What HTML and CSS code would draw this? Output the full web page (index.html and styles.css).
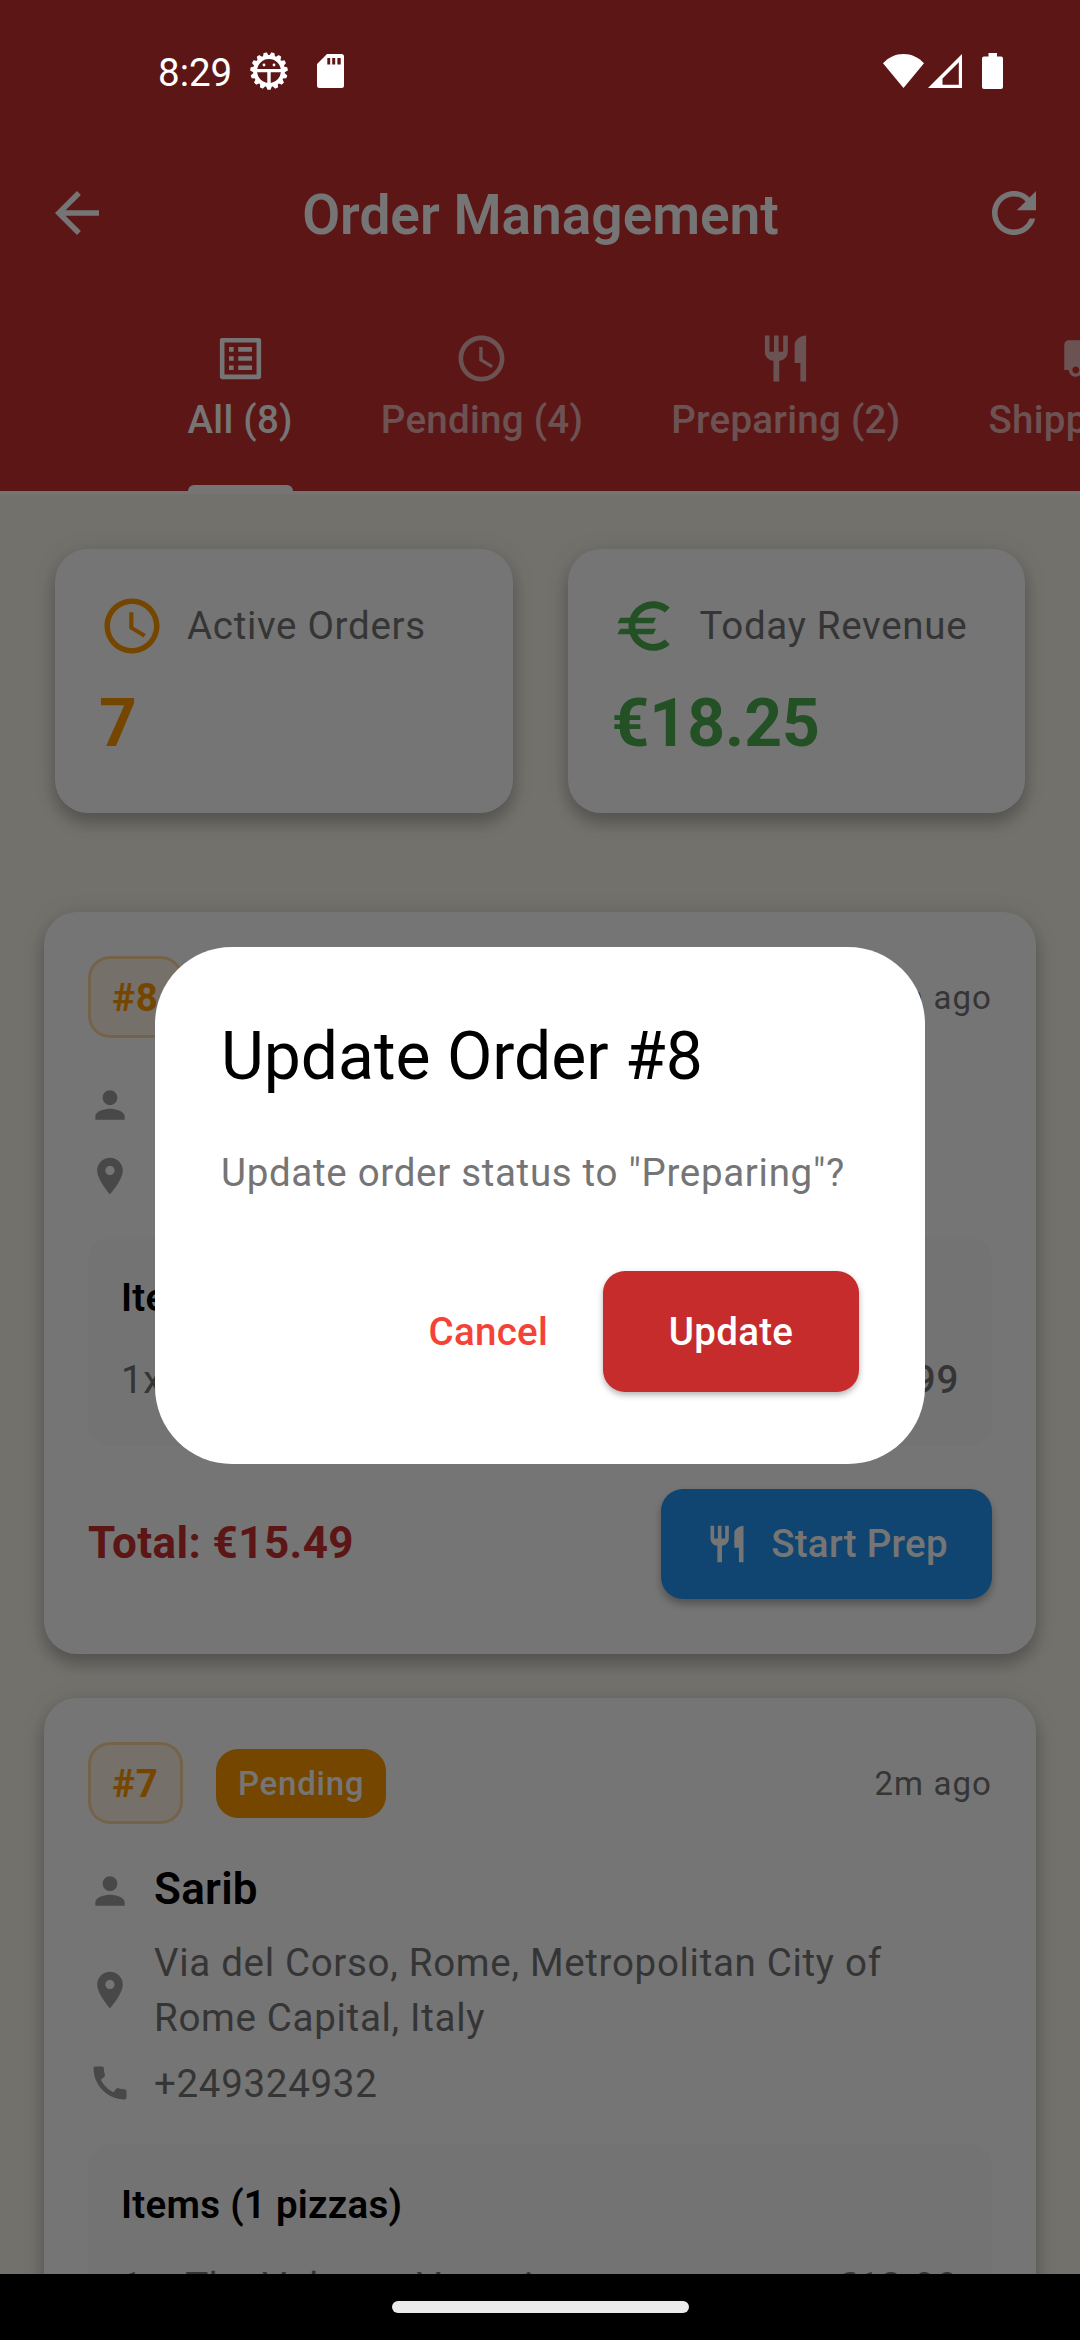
FILE: index.html
```html
<!DOCTYPE html>
<html lang="en">
<head>
<meta charset="utf-8">
<title>Order Management</title>
<link rel="stylesheet" href="styles.css">
</head>
<body>
<svg class="sprite" aria-hidden="true">
  <symbol id="clock" viewBox="0 0 24 24"><path d="M11.99 2C6.47 2 2 6.48 2 12s4.47 10 9.99 10C17.52 22 22 17.52 22 12S17.52 2 11.99 2zM12 20c-4.42 0-8-3.58-8-8s3.58-8 8-8 8 3.58 8 8-3.58 8-8 8zm.5-13H11v6l5.25 3.15.75-1.23-4.5-2.67z"/></symbol>
  <symbol id="restaurant" viewBox="0 0 24 24"><path d="M11 9H9V2H7v7H5V2H3v7c0 2.12 1.66 3.84 3.75 3.97V22h2.5v-9.03C11.34 12.84 13 11.12 13 9V2h-2v7zm5-3v8h2.5v8H21V2c-2.76 0-5 2.24-5 4z"/></symbol>
  <symbol id="person" viewBox="0 0 24 24"><path d="M12 12c2.21 0 4-1.79 4-4s-1.79-4-4-4-4 1.79-4 4 1.79 4 4 4zm0 2c-2.67 0-8 1.34-8 4v2h16v-2c0-2.66-5.33-4-8-4z"/></symbol>
  <symbol id="place" viewBox="0 0 24 24"><path d="M12 2C8.13 2 5 5.13 5 9c0 5.25 7 13 7 13s7-7.75 7-13c0-3.87-3.13-7-7-7zm0 9.500c-1.380 0-2.500-1.120-2.500-2.500s1.120-2.500 2.500-2.500 2.500 1.120 2.500 2.500-1.120 2.500-2.500 2.500z"/></symbol>
  <symbol id="phone" viewBox="0 0 24 24"><path d="M20.010 15.380c-1.230 0-2.420-.2-3.530-.56-.35-.12-.74-.03-1.010.24l-1.570 1.970c-2.830-1.350-5.480-3.900-6.890-6.830l1.950-1.660c.27-.28.35-.67.24-1.020-.37-1.110-.56-2.300-.56-3.530 0-.54-.45-.99-.99-.99H4.190C3.650 3 3 3.240 3 3.990 3 13.280 10.730 21 20.010 21c.71 0 .99-.63.99-1.180v-3.450c0-.54-.45-.99-.99-.99z"/></symbol>
  <symbol id="tooth" viewBox="0 0 38 38"><path d="M15.800 33.500h6.400l-1.700 4.300h-3z"/></symbol>
</svg>

<div class="screen">
  <header class="app-bar">
    <div class="toolbar">
      <svg class="icon-24" viewBox="0 0 24 24"><path d="M20 11H7.830l5.590-5.590L12 4l-8 8 8 8 1.410-1.410L7.830 13H20v-2z"/></svg>
      <h1 class="title">Order Management</h1>
      <svg class="icon-24" viewBox="0 0 24 24"><path d="M17.650 6.350C16.200 4.900 14.210 4 12 4c-4.420 0-7.990 3.580-7.990 8s3.570 8 7.990 8c3.730 0 6.840-2.550 7.730-6h-2.080c-.82 2.330-3.040 4-5.650 4-3.310 0-6-2.690-6-6s2.690-6 6-6c1.660 0 3.140.69 4.220 1.780L13 11h7V4l-2.350 2.350z"/></svg>
    </div>
    <nav class="tabs">
      <div class="tab active">
        <svg class="icon-20" viewBox="0 0 24 24"><path d="M11 7h6v2h-6zm0 4h6v2h-6zm0 4h6v2h-6zM7 7h2v2H7zm0 4h2v2H7zm0 4h2v2H7zM20.100 3H3.900c-.5 0-.9.4-.9.9v16.200c0 .4.4.9.9.9h16.200c.4 0 .9-.5.9-.9V3.900c0-.5-.5-.9-.9-.9zM19 19H5V5h14v14z"/></svg>
        <span>All (8)</span>
      </div>
      <div class="tab"><svg class="icon-20"><use href="#clock"/></svg><span>Pending (4)</span></div>
      <div class="tab"><svg class="icon-20"><use href="#restaurant"/></svg><span>Preparing (2)</span></div>
      <div class="tab">
        <svg class="icon-20" viewBox="0 0 24 24"><path d="M20 8h-3V4H3c-1.100 0-2 .9-2 2v11h2c0 1.660 1.340 3 3 3s3-1.340 3-3h6c0 1.660 1.340 3 3 3s3-1.340 3-3h2v-5l-3-4zM6 18.500c-.83 0-1.500-.67-1.500-1.500s.67-1.500 1.500-1.500 1.500.67 1.500 1.500-.67 1.500-1.500 1.500zm13.500-9l1.960 2.500H17V9.500h2.500zm-1.500 9c-.83 0-1.500-.67-1.500-1.500s.67-1.500 1.500-1.500 1.500.67 1.500 1.500-.67 1.500-1.500 1.500z"/></svg>
        <span>Shipped (1)</span>
      </div>
    </nav>
  </header>

  <main class="content">
    <section class="stats">
      <div class="stat orange">
        <div class="stat-head"><svg class="icon-24"><use href="#clock"/></svg><span>Active Orders</span></div>
        <div class="stat-value">7</div>
      </div>
      <div class="stat green">
        <div class="stat-head"><svg class="icon-24" viewBox="0 0 24 24"><path d="M15 18.500c-2.510 0-4.680-1.420-5.760-3.500H15l1-2H8.580c-.05-.33-.08-.66-.08-1s.03-.67.08-1H15l1-2H9.240C10.320 6.920 12.500 5.500 15 5.500c1.610 0 3.090.59 4.230 1.570L21 5.300C19.410 3.870 17.300 3 15 3c-3.920 0-7.240 2.510-8.480 6H3l-1 2h4.060c-.04.33-.06.66-.06 1s.02.67.06 1H3l-1 2h4.520c1.240 3.490 4.560 6 8.480 6 2.310 0 4.410-.87 6-2.300l-1.780-1.770c-1.130.98-2.600 1.570-4.220 1.570z"/></svg><span>Today Revenue</span></div>
        <div class="stat-value">€18.25</div>
      </div>
    </section>

    <section class="orders">
      <article class="order">
        <div class="order-head"><span class="number">#8</span><span class="status">Pending</span><span class="age">1m ago</span></div>
        <div class="details">
          <div class="detail name"><svg class="icon-16"><use href="#person"/></svg></div>
          <div class="detail"><svg class="icon-16"><use href="#place"/></svg></div>
        </div>
        <div class="items">
          <h2 class="items-title">Items (1 pizzas)</h2>
          <div class="item"><span>1x</span><span class="price">€12.99</span></div>
        </div>
        <div class="order-foot">
          <span class="total">Total: €15.49</span>
          <button class="prep"><svg class="icon-16"><use href="#restaurant"/></svg><span>Start Prep</span></button>
        </div>
      </article>

      <article class="order">
        <div class="order-head"><span class="number">#7</span><span class="status">Pending</span><span class="age">2m ago</span></div>
        <div class="details">
          <div class="detail name"><svg class="icon-16"><use href="#person"/></svg><span>Sarib</span></div>
          <div class="detail"><svg class="icon-16"><use href="#place"/></svg><span>Via del Corso, Rome, Metropolitan City of Rome Capital, Italy</span></div>
          <div class="detail"><svg class="icon-16"><use href="#phone"/></svg><span>+249324932</span></div>
        </div>
        <div class="items">
          <h2 class="items-title">Items (1 pizzas)</h2>
          <div class="item"><span>1x</span><span>The Volcano Vesuvio</span><span class="price">€12.99</span></div>
        </div>
      </article>
    </section>
  </main>

  <div class="scrim">
    <div class="dialog">
      <h2 class="dialog-title">Update Order #8</h2>
      <p class="dialog-text">Update order status to "Preparing"?</p>
      <div class="dialog-actions"><button class="cancel">Cancel</button><button class="confirm">Update</button></div>
    </div>
  </div>

  <div class="status-bar">
    <span class="time">8:29</span>
    <svg class="gear" viewBox="0 0 38 38">
      <circle cx="19" cy="19" r="13.900" fill="none" stroke="#fff" stroke-width="4"/>
      <path d="M6 17h26v3.200H20.700v12h-3.400v-12H6z"/>
      <circle cx="14" cy="13" r="1.400"/><circle cx="24" cy="13" r="1.400"/>
      <use href="#tooth"/>
      <use href="#tooth" transform="rotate(24 19 19)"/><use href="#tooth" transform="rotate(48 19 19)"/>
      <use href="#tooth" transform="rotate(72 19 19)"/><use href="#tooth" transform="rotate(96 19 19)"/>
      <use href="#tooth" transform="rotate(120 19 19)"/><use href="#tooth" transform="rotate(144 19 19)"/>
      <use href="#tooth" transform="rotate(168 19 19)"/><use href="#tooth" transform="rotate(192 19 19)"/>
      <use href="#tooth" transform="rotate(216 19 19)"/><use href="#tooth" transform="rotate(240 19 19)"/>
      <use href="#tooth" transform="rotate(264 19 19)"/><use href="#tooth" transform="rotate(288 19 19)"/>
      <use href="#tooth" transform="rotate(312 19 19)"/><use href="#tooth" transform="rotate(336 19 19)"/>
    </svg>
    <svg class="sd" viewBox="0 0 27 34"><path fill-rule="evenodd" d="M10 0h14.500a2.500 2.500 0 0 1 2.500 2.500v29a2.500 2.500 0 0 1-2.500 2.500h-22A2.500 2.500 0 0 1 0 31.500V10zm.3 4v6.500h2.900V4zm4.900 0v6.500h3V4zm5.200 0v6.500h3.300V4z"/></svg>
    <span class="spacer"></span>
    <svg class="wifi" viewBox="0 0 41 34"><path d="M0 9.300C5.500 3.300 12.600 0 20.500 0S35.500 3.300 41 9.300L20.500 34z"/></svg>
    <svg class="signal" viewBox="0 0 34 34"><path fill-rule="evenodd" d="M0 34L34 0v34zm14.500-3.300h16.300V8.300L14.500 24.500z"/></svg>
    <svg class="battery" viewBox="0 0 21 36"><path d="M6.500 0h8.500v3.500h4a2 2 0 0 1 2 2V34a2 2 0 0 1-2 2H2a2 2 0 0 1-2-2V5.500a2 2 0 0 1 2-2h4.500z"/></svg>
  </div>
  <div class="nav-bar"><span class="handle"></span></div>
</div>
</body>
</html>
```
FILE: styles.css
```css
* { box-sizing: border-box; margin: 0; padding: 0; }
body { font-family: Roboto, "Liberation Sans", sans-serif; font-size: 38.5px; line-height: 55px; letter-spacing: 0.69px; color: #757575; }
button { font: inherit; letter-spacing: 0.27px; border: 0; }
svg { display: block; flex: none; fill: currentColor; }
.sprite { position: absolute; width: 0; height: 0; }
.icon-24 { width: 66px; height: 66px; }
.icon-20 { width: 55px; height: 55px; }
.icon-16 { width: 44px; height: 44px; }

.screen { position: relative; width: 1080px; height: 2340px; overflow: hidden; background: #faf6ec; }

.app-bar { height: 494px; padding-top: 136px; background: #ca3030; border-bottom: 3px solid #fff; color: #fff; overflow: hidden; }
.toolbar { display: flex; align-items: center; justify-content: space-between; height: 154px; padding: 0 33px 0 44px; }
.title { margin-right: 10px; padding-top: 3px; font-size: 55px; line-height: 70px; font-weight: 600; letter-spacing: 0; }
.tabs { display: flex; gap: 88px; height: 204px; padding-left: 187.5px; }
.tab { flex: none; display: flex; flex-direction: column; align-items: center; gap: 6px; padding-top: 41px; font-weight: 500; letter-spacing: 0.27px; color: rgba(255, 255, 255, .7); opacity: .93; white-space: nowrap; }
.tab.active { color: #fff; opacity: 1; }
.tab.active::after { content: ""; align-self: stretch; height: 6px; margin-top: 32px; border-radius: 8px 8px 0 0; background: #fff; }

.stats { display: flex; gap: 55px; padding: 55px; }
.stat, .order { background: #fff; border-radius: 33px; box-shadow: 0 11px 16px rgba(0, 0, 0, .2), 0 2px 22px rgba(0, 0, 0, .13); }
.stat { flex: 1; height: 264px; padding: 44px; }
.stat-head { display: flex; align-items: center; gap: 22px; height: 66px; white-space: nowrap; }
.stat-head span { padding-bottom: 2px; color: #757575; }
.stat-value { margin-top: 21px; font-size: 66px; line-height: 88px; font-weight: 700; letter-spacing: 0; }
.orange { color: #ff9800; }
.green { color: #4caf50; }

.orders { display: flex; flex-direction: column; gap: 44px; padding: 44px 44px 0; }
.order { padding: 44px 44px 45px; }
.order-head { display: flex; align-items: center; height: 82.5px; margin-bottom: 33px; }
.number { display: flex; align-items: center; justify-content: center; width: 95px; height: 82px; border: 3px solid rgba(255, 152, 0, .3); border-radius: 22px; background: rgba(255, 152, 0, .1); color: #ff9800; font-weight: 700; }
.status { display: flex; align-items: center; height: 69px; margin-left: 33px; padding: 0 22px; border-radius: 22px; background: #ff9800; color: #fff; font-size: 33px; font-weight: 500; letter-spacing: 0.75px; }
.age { margin-left: auto; font-size: 33px; letter-spacing: 1.1px; }
.details { display: flex; flex-direction: column; gap: 11px; margin-bottom: 33px; }
.detail { display: flex; align-items: center; gap: 22px; min-height: 55px; }
.detail .icon-16 { color: #9e9e9e; }
.name { min-height: 66px; color: #000; font-size: 44px; line-height: 62px; font-weight: 600; letter-spacing: 0.27px; }
.name span { padding-bottom: 4px; }
.items { padding: 33px; border-radius: 22px; background: #fafafa; }
.items-title { margin-bottom: 22px; color: #000; font-size: 38.5px; font-weight: 600; letter-spacing: 0.27px; }
.item { display: flex; gap: 22px; padding: 5.5px 0; }
.price { margin-left: auto; font-weight: 500; }
.order-foot { display: flex; align-items: center; justify-content: space-between; height: 131px; margin-top: 32.5px; }
.total { padding-bottom: 1px; color: #ca3030; font-size: 44px; font-weight: 700; letter-spacing: 0.4px; }
.prep { display: flex; align-items: center; justify-content: center; gap: 22px; width: 331px; height: 110px; border-radius: 22px; background: #2196f3; color: #fff; font-weight: 500; box-shadow: 0 5px 8px rgba(0, 0, 0, .3); }

.scrim { position: absolute; inset: 0; padding-top: 947px; background: rgba(0, 0, 0, .54); }
.dialog { width: 770px; height: 517px; margin: 0 auto; padding: 66px; border-radius: 77px; background: #fff; }
.dialog-title { color: #000; font-size: 66px; line-height: 88px; font-weight: 400; letter-spacing: 0; }
.dialog-text { margin-top: 44px; white-space: nowrap; }
.dialog-actions { display: flex; align-items: center; justify-content: flex-end; gap: 22px; margin-top: 71px; font-weight: 500; }
.cancel { padding: 0 33px; background: none; color: #f44336; }
.confirm { width: 256px; height: 121px; border-radius: 22px; background: #c62c2c; color: #fff; box-shadow: 0 3px 6px rgba(0, 0, 0, .3); }

.status-bar { position: absolute; top: 0; left: 0; right: 0; display: flex; align-items: center; height: 142px; padding: 0 77px 0 158px; color: #fff; }
.time { letter-spacing: 0; width: 92px; padding-top: 2px; }
.gear { width: 38px; height: 38px; }
.sd { width: 27px; height: 34px; margin-left: 29px; }
.spacer { flex: 1; }
.wifi { width: 41px; height: 34px; }
.signal { width: 34px; height: 34px; margin-left: 3.500px; }
.battery { width: 21px; height: 36px; margin-left: 20.500px; }
.nav-bar { position: absolute; bottom: 0; left: 0; right: 0; display: flex; justify-content: center; height: 66px; padding-top: 27px; background: #000; }
.handle { width: 297px; height: 12px; border-radius: 6px; background: #ebebeb; }
```
